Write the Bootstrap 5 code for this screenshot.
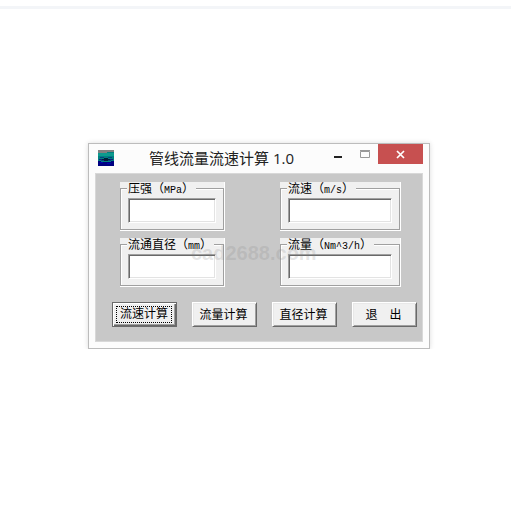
<!DOCTYPE html>
<html lang="zh-CN">
<head>
<meta charset="utf-8">
<meta name="viewport" content="width=device-width, initial-scale=1">
<title>管线流量流速计算 1.0</title>
<link href="https://cdn.jsdelivr.net/npm/bootstrap@5.3.0/dist/css/bootstrap.min.css" rel="stylesheet">
<style>
body { background: #fff; color: #000; font-family: "Liberation Sans", "Noto Sans CJK SC", sans-serif; font-size: 12px; line-height: 14px; }
.page-rule { height: 3px; margin-top: 6px; background: #f3f5f8; }
.stage { padding: 134px 81px 0 88px; }
.app-window { max-width: 480px; background: #fcfcfc; border: 1px solid #bcbcbc; padding: 0 6px 6px; box-shadow: 0 0 5px rgba(0,0,0,.14); }
.title-bar { height: 29px; }
.app-icon { margin: 6px 0 0 3px; }
.app-title { margin: 0 0 0 35px; font: 400 15px/29px "Open Sans", "Noto Sans CJK SC", sans-serif; color: #222; }
.win-btn { border: 0; background: transparent; height: 20px; width: 27px; padding: 0; display: block; }
.win-close { background: #c75050; width: 45px; }
.client { background: #c8c8c8; border: 1px solid #d8d8d8; padding: 8px 5px 14px 16px; }
.fields { padding: 0 16px 0 8px; row-gap: 7px; }
.panel-box { background: #f0f0f0; border: solid #fff; border-width: 0 1px 1px 0; }
.panel-box fieldset { height: 48px; border: 1px solid #a0a0a0; padding: 0 7px; box-shadow: inset 1px 1px #fff; }
.panel-box legend { float: none; width: auto; height: 12px; margin: 0 0 4px -1px; padding: 0 2px 0 1px; font-size: 12px; line-height: 14px; white-space: nowrap; background: #f0f0f0; }
.panel-box label { display: block; }
.unit { font: 10px/12px "Liberation Mono", monospace; }
.gauge-a { width: 105px; }
.gauge-b { width: 121px; }
.sunken { display: block; width: 100%; height: 25px; background: #fff; border: 1px solid; border-color: #a0a0a0 #fff #fff #a0a0a0; border-radius: 0; padding: 0 3px; outline: 0; box-shadow: inset 1px 1px #696969, inset -1px -1px #e3e3e3; }
.actions { margin-top: 15px; }
.raised { width: 65px; height: 25px; padding: 0 2px 0 0; background: #f0f0f0; color: #000; font-size: 12px; line-height: 14px; border: 1px solid; border-color: #fff #696969 #696969 #fff; border-radius: 0; box-shadow: inset 1px 1px #e8e8e8, inset -1px -1px #a0a0a0; white-space: nowrap; }
.raised.chosen { border-color: #696969; box-shadow: inset 1px 1px #fff, inset -1px -1px #696969, inset -2px -2px #a0a0a0; padding: 3px 4px 3px 3px; }
.chosen span { display: block; border: 1px dotted #000; line-height: 15px; }
.watermark { position: absolute; left: 95px; top: 67px; font: 700 20px/24px "Liberation Sans", sans-serif; color: rgba(128,128,128,.2); pointer-events: none; }
</style>
<script src="https://cdn.jsdelivr.net/npm/bootstrap@5.3.0/dist/js/bootstrap.bundle.min.js"></script>
</head>
<body>
<div class="page-rule"></div>
<main class="stage">
  <section class="app-window">
    <header class="title-bar d-flex align-items-start">
      <svg class="app-icon flex-shrink-0" width="16" height="16" viewBox="0 0 16 16" shape-rendering="crispEdges" aria-hidden="true">
        <path fill="#008080" d="M0 0h16v16H0z"/>
        <path fill="#808080" d="M0 0h16v2H9v1H0z"/>
        <path fill="#0c9a8e" d="M0 3h16v3H0z"/>
        <path fill="#000080" d="M0 11h3v1h10v-1h3v5H0z"/>
        <path fill="#0000b0" d="M2 12h3v1H2zm7 1h4v1H9z"/>
        <path fill="#064080" d="M2 7h4v1H2zm8 0h4v1h-4zM3 10h10v1H3z"/>
        <path fill="#001c38" d="M6 8h4v1h2v1h-2v1H6v-1H4V9h2z"/>
        <path fill="#102080" d="M1 9h3v1H1zm11 0h3v1h-3z"/>
      </svg>
      <h1 class="app-title flex-grow-1 text-nowrap">管线流量流速计算 1.0</h1>
      <button type="button" class="win-btn" aria-label="最小化"><svg class="d-block" width="27" height="20"><path fill="#222" d="M10 12h8v2h-8z"/></svg></button>
      <button type="button" class="win-btn" aria-label="最大化"><svg class="d-block" width="27" height="20"><path fill="none" stroke="#999" d="M9.500 7.500h9v6h-9zM9 6.500h10"/></svg></button>
      <button type="button" class="win-btn win-close" aria-label="关闭"><svg class="d-block" width="45" height="20"><path stroke="#fff" stroke-width="1.700" d="M19 7l7 7M26 7l-7 7"/></svg></button>
    </header>
    <form class="client position-relative">
      <div class="fields d-flex flex-wrap justify-content-between">
        <div class="panel-box gauge-a"><fieldset><legend><label for="pressure">压强（<span class="unit">MPa</span>）</label></legend><input class="sunken" id="pressure" type="text"></fieldset></div>
        <div class="panel-box gauge-b"><fieldset><legend><label for="speed">流速（<span class="unit">m/s</span>）</label></legend><input class="sunken" id="speed" type="text"></fieldset></div>
        <div class="panel-box gauge-a"><fieldset><legend><label for="bore">流通直径（<span class="unit">mm</span>）</label></legend><input class="sunken" id="bore" type="text"></fieldset></div>
        <div class="panel-box gauge-b"><fieldset><legend><label for="flow">流量（<span class="unit">Nm^3/h</span>）</label></legend><input class="sunken" id="flow" type="text"></fieldset></div>
      </div>
      <div class="actions d-flex justify-content-between">
        <button type="button" class="raised chosen"><span>流速计算</span></button>
        <button type="button" class="raised">流量计算</button>
        <button type="button" class="raised">直径计算</button>
        <button type="button" class="raised">退　出</button>
      </div>
      <div class="watermark">cad2688.com</div>
    </form>
  </section>
</main>
</body>
</html>
